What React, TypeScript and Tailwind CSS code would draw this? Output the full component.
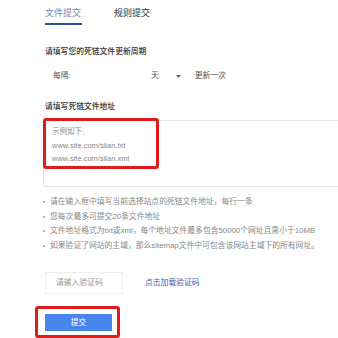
import React from 'react';

const TIPS = [
  '请在输入框中填写当前选择站点的死链文件地址，每行一条',
  '您每次最多可提交20条文件地址',
  '文件地址格式为txt或xml，每个地址文件最多包含50000个网址且需小于10MB',
  '如果验证了网站的主域，那么sitemap文件中可包含该网站主域下的所有网址。',
];

export default function App() {
  return (
    <div
      className="relative w-[338px] h-[338px] overflow-hidden bg-white"
      style={{ fontFamily: '"Liberation Sans", "Noto Sans CJK SC", sans-serif' }}
    >
      <div className="pl-[45px]">
        {/* tabs */}
        <div className="flex gap-[32px] pt-[7px]">
          <div className="flex flex-col">
            <span className="text-[9px] leading-[12px] text-[#7587b3]">文件提交</span>
            <div className="mt-[4px] h-[2px] w-[37px] bg-[#2f4f8c]" />
          </div>
          <span className="text-[9px] leading-[12px] text-[#333]">规则提交</span>
        </div>

        <p className="mt-[21px] text-[7.8px] leading-[12px] font-medium text-[#333]">
          请填写您的死链文件更新周期
        </p>

        <div className="mt-[12px] flex items-center text-[7.8px] leading-[12px] text-[#555]">
          <span className="w-[106px] pl-[8px]">每隔:</span>
          <span>天</span>
          <svg className="ml-[17px]" width="5" height="3" viewBox="0 0 5 3">
            <path d="M0 0h5L2.5 3z" fill="#666" />
          </svg>
          <span className="ml-[14px]">更新一次</span>
        </div>

        <p className="mt-[19px] text-[7.8px] leading-[12px] font-medium text-[#333]">
          请填写死链文件地址
        </p>

        <div className="relative mt-[7px] -ml-[2px] h-[67px] w-[320px] border border-[#e6e6e6] pl-[8px] pt-[4px] text-[7.5px] leading-[13.5px] text-[#888]">
          <div>示例如下:</div>
          <div>www.site.com/silan.txt</div>
          <div>www.site.com/silan.xml</div>
          <div className="absolute -left-[1px] -top-[3px] h-[51px] w-[116px] rounded-[3px] border-[3px] border-[#e01b1b]" />
        </div>

        <ul className="mt-[8px] text-[7.8px] leading-[14.5px] text-[#888]">
          {TIPS.map((t) => (
            <li key={t} className="flex items-center whitespace-nowrap">
              <span className="-ml-[2px] mr-[5px] h-[2px] w-[2px] rounded-full bg-[#999]" />
              {t}
            </li>
          ))}
        </ul>

        <div className="mt-[19px] flex items-center">
          <div className="flex h-[22px] w-[78px] items-center border border-[#eeeeee] pl-[10px] text-[7.8px] text-[#999]">
            请输入验证码
          </div>
          <span className="ml-[22px] text-[7.8px] text-[#4a58b0]">点击加载验证码</span>
        </div>

        <div className="relative mt-[20px]">
          <button className="flex h-[17px] w-[67px] items-center justify-center bg-[#4686ec] text-[7.8px] text-white">
            提交
          </button>
          <div className="absolute -left-[10px] -top-[8px] h-[32px] w-[85px] rounded-[3px] border-[3px] border-[#e01b1b]" />
        </div>
      </div>
    </div>
  );
}
